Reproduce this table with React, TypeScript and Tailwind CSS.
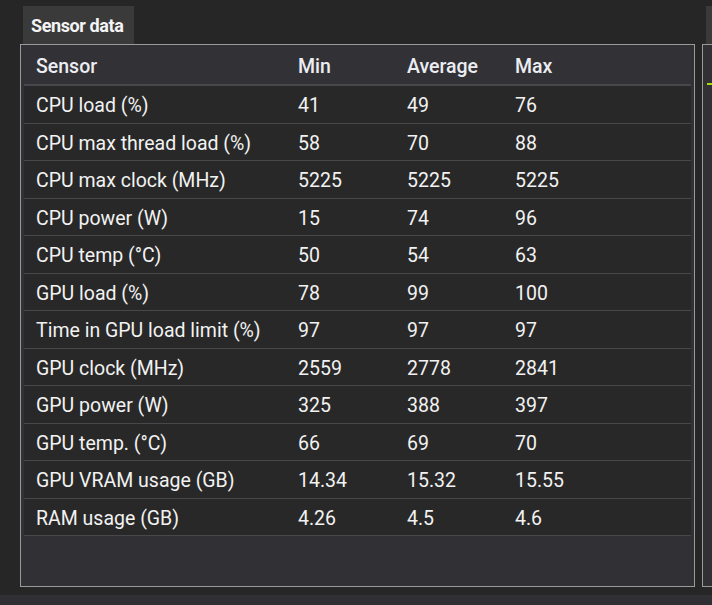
import React from "react";

const ROWS: [string, string, string, string][] = [
    ["CPU load (%)", "41", "49", "76"],
    ["CPU max thread load (%)", "58", "70", "88"],
    ["CPU max clock (MHz)", "5225", "5225", "5225"],
    ["CPU power (W)", "15", "74", "96"],
    ["CPU temp (°C)", "50", "54", "63"],
    ["GPU load (%)", "78", "99", "100"],
    ["Time in GPU load limit (%)", "97", "97", "97"],
    ["GPU clock (MHz)", "2559", "2778", "2841"],
    ["GPU power (W)", "325", "388", "397"],
    ["GPU temp. (°C)", "66", "69", "70"],
    ["GPU VRAM usage (GB)", "14.34", "15.32", "15.55"],
    ["RAM usage (GB)", "4.26", "4.5", "4.6"],
];

const COLS = "grid grid-cols-[274px_109px_108px_1fr] items-center";

export default function App() {
    return (
        <div className="w-[712px] h-[605px] bg-[#262626] overflow-hidden flex flex-col font-['Roboto',sans-serif] text-[#f2f2f2]">
            <div className="flex flex-1 pt-[6px]">
                {/* Sensor data panel */}
                <div className="ml-[20px] w-[675px] flex flex-col">
                    <div className="ml-[3px] w-[111px] h-[38px] bg-[#3a3a3a] flex items-center pl-[8px] text-[18px] font-bold tracking-[-0.4px] text-[#f4f4f4]">
                        Sensor data
                    </div>
                    <div className="h-[543px] border border-[#9a9a9a] bg-[#313135] pl-[3px] pr-[3px] pt-[1px]">
                        <div className={`${COLS} h-[40px] pt-[3px] bg-[#323236] border-b-2 border-[#48484c] text-[19.5px] font-medium text-[#ecedf2]`}>
                            <div className="pl-[12px]">Sensor</div>
                            <div>Min</div>
                            <div>Average</div>
                            <div>Max</div>
                        </div>
                        {ROWS.map((r) => (
                            <div key={r[0]} className={`${COLS} h-[37.5px] pt-[3px] bg-[#282828] border-b border-[#48484c] text-[19.5px]`}>
                                <div className="pl-[12px]">{r[0]}</div>
                                <div>{r[1]}</div>
                                <div>{r[2]}</div>
                                <div>{r[3]}</div>
                            </div>
                        ))}
                    </div>
                </div>

                {/* Next panel, cut off */}
                <div className="ml-[7px] flex-1 flex flex-col">
                    <div className="ml-[4px] h-[38px] bg-[#3a3a3a]" />
                    <div className="h-[543px] border-l border-t border-b border-[#9a9a9a] bg-[#313135] pt-[38px] pl-[4px]">
                        <div className="h-[2px] bg-[#a8e000]" />
                    </div>
                </div>
            </div>
            <div className="h-[10px] bg-[#303034]" />
        </div>
    );
}
